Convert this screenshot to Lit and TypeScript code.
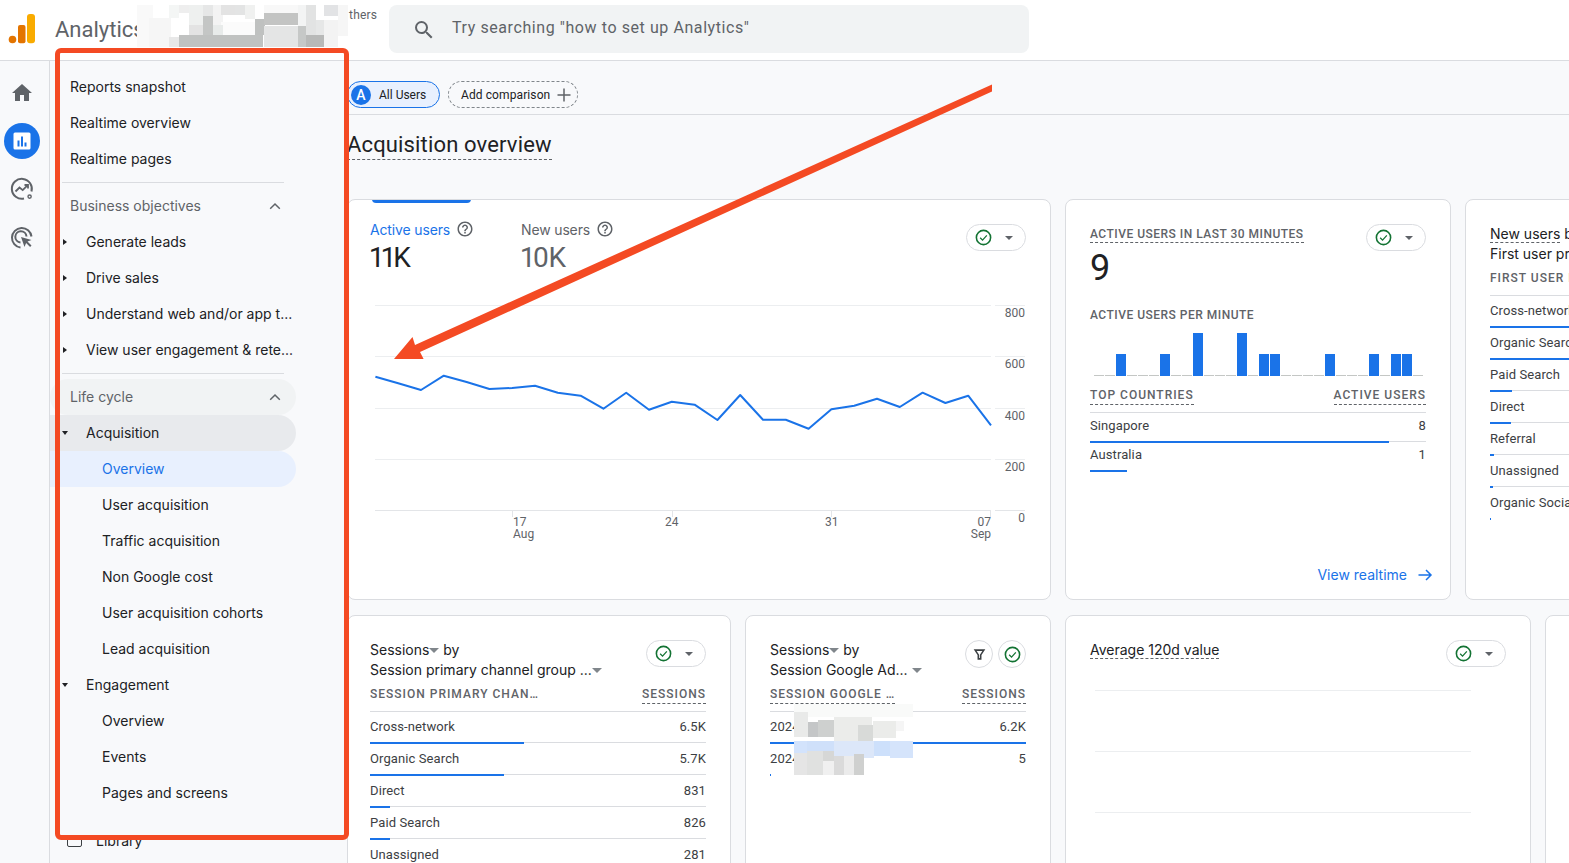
import { LitElement, html, css, svg } from 'lit';
import { customElement } from 'lit/decorators.js';

type Row = { label: string; value: string; bar: number };
type TableCard = {
  width: number;
  first?: boolean;
  title: unknown;
  dim: string;
  dimDashed?: boolean;
  metric: string;
  rows: Row[];
  actions: unknown;
};

const NAV_TOP = ['Reports snapshot', 'Realtime overview', 'Realtime pages'];
const NAV_OBJECTIVES = ['Generate leads', 'Drive sales', 'Understand web and/or app t...', 'View user engagement & rete...'];
const NAV_ACQUISITION = ['User acquisition', 'Traffic acquisition', 'Non Google cost', 'User acquisition cohorts', 'Lead acquisition'];
const NAV_ENGAGEMENT = ['Overview', 'Events', 'Pages and screens'];

const LINE_Y = [
  376.7, 383.3, 390, 375.7, 382, 389, 388, 385.7, 392.7, 395.7, 408.7, 392.7, 409.7, 401.7, 404.7, 420, 395, 419.7,
  419.7, 428.7, 409.3, 405.7, 398.7, 407, 392.7, 403, 395.7, 425.3,
];
const GRID_Y = [
  { y: 305.5, label: '800' },
  { y: 356.5, label: '600' },
  { y: 408.5, label: '400' },
  { y: 459.5, label: '200' },
  { y: 510.5, label: '0' },
];
const MINUTE_BARS = [0, 0, 1, 0, 0, 0, 1, 0, 0, 2, 0, 0, 0, 2, 0, 1, 1, 0, 0, 0, 0, 1, 0, 0, 0, 1, 0, 1, 1, 0];

// censored parts of the screenshot: x, y, w, h, colour
const MOSAIC: [number, number, number, number, string][] = [
  [137, 5, 16, 42, '#f9f9f9'],
  [149, 18, 22, 29, '#f6f6f6'],
  [169, 5, 10, 13, '#f4f6f5'],
  [179, 5, 10, 8, '#eeeeee'],
  [189, 5, 14, 20, '#eef0ef'],
  [203, 5, 10, 11, '#e6e7e7'],
  [189, 25, 14, 10, '#e3e3e3'],
  [203, 16, 10, 19, '#c4c6c5'],
  [213, 5, 10, 20, '#f3f3f3'],
  [221, 5, 14, 10, '#e3e3e3'],
  [235, 5, 10, 10, '#e3e4e4'],
  [245, 5, 10, 14, '#f0f1f0'],
  [169, 37, 10, 10, '#e8e8e8'],
  [179, 35, 84, 12, '#c0c2c1'],
  [221, 22, 34, 13, '#fbfbfb'],
  [213, 25, 10, 10, '#e8ebea'],
  [255, 19, 10, 16, '#bfc1c0'],
  [264, 5, 34, 8, '#f8f8f8'],
  [264, 13, 34, 12, '#c3c4c3'],
  [264, 26, 34, 21, '#e4e5e5'],
  [298, 5, 10, 21, '#f3f4f4'],
  [298, 26, 8, 21, '#c6c8c7'],
  [306, 5, 10, 30, '#e2e3e3'],
  [306, 35, 18, 12, '#b8b9b8'],
  [316, 20, 8, 15, '#e6e7e7'],
  [324, 5, 14, 11, '#e2e3e5'],
  [324, 20, 14, 27, '#f3f3f3'],
  [338, 5, 10, 31, '#f6f6f6'],
  [794, 704, 119, 13, '#f9faf9'],
  [794, 712, 14, 25, '#e9eae9'],
  [808, 722, 10, 15, '#c4c6c7'],
  [818, 720, 16, 17, '#ced0cf'],
  [834, 717, 38, 29, '#ebecea'],
  [858, 725, 15, 21, '#d8dad8'],
  [873, 721, 23, 17, '#ebecea'],
  [896, 721, 8, 10, '#f5f5f5'],
  [794, 741, 13, 17, '#d3e3fc'],
  [807, 741, 28, 15, '#cfe0fa'],
  [834, 741, 40, 17, '#dce7f9'],
  [874, 741, 17, 15, '#cde0fb'],
  [890, 741, 23, 17, '#d5e4fb'],
  [794, 753, 13, 22, '#e5e5e5'],
  [807, 751, 16, 24, '#e0e1e0'],
  [823, 751, 11, 12, '#d6d7d6'],
  [823, 761, 11, 14, '#f0f0f0'],
  [834, 756, 10, 19, '#dadada'],
  [844, 756, 10, 19, '#ebebeb'],
  [854, 754, 10, 21, '#cfd0cf'],
];

const caretDown = html`<span class="caret"></span>`;
const checkIcon = svg`<circle cx="12" cy="12" r="9" fill="none" stroke="#137333" stroke-width="2"/><path d="M7.8 12.3l3 3 5.4-6" fill="none" stroke="#137333" stroke-width="1.6"/>`;
const helpIcon = html`<svg class="help" viewBox="0 0 24 24" fill="#5f6368">
  <path d="M11 18h2v-2h-2v2zm1-16C6.48 2 2 6.48 2 12s4.48 10 10 10 10-4.48 10-10S17.52 2 12 2zm0 18c-4.41 0-8-3.59-8-8s3.59-8 8-8 8 3.59 8 8-3.59 8-8 8zm0-14c-2.21 0-4 1.79-4 4h2c0-1.1.9-2 2-2s2 .9 2 2c0 2-3 1.75-3 5h2c0-2.25 3-2.5 3-5 0-2.21-1.79-4-4-4z"/>
</svg>`;
const statusPill = html`<div class="pill"><svg viewBox="0 0 24 24">${checkIcon}</svg><span class="pill-caret"></span></div>`;

@customElement('app-root')
export class AppRoot extends LitElement {
  static override styles = css`
    :host {
      display: block;
      position: relative;
      height: 100vh;
      overflow: hidden;
      background: #f8f9fb;
      color: #202124;
      font-family: Roboto, 'Liberation Sans', sans-serif;
      font-size: 14px;
    }
    * {
      box-sizing: border-box;
    }

    /* header */
    .topbar {
      height: 61px;
      background: #fff;
      border-bottom: 1px solid #dadce0;
      display: flex;
      align-items: flex-start;
    }
    .logo {
      width: 55px;
      height: 60px;
      flex: none;
    }
    .product {
      font-size: 22px;
      line-height: 28px;
      margin-top: 16px;
      color: #5f6368;
      width: 294px;
      flex: none;
    }
    .account {
      font-size: 12px;
      line-height: 16px;
      margin-top: 7px;
      color: #5f6368;
      width: 40px;
      flex: none;
      letter-spacing: 0.2px;
    }
    .search {
      width: 640px;
      height: 48px;
      margin-top: 5px;
      background: #f1f3f4;
      border-radius: 8px;
      display: flex;
      align-items: center;
      gap: 16px;
      padding-left: 23px;
      padding-bottom: 4px;
      color: #5f6368;
      font-size: 16px;
      letter-spacing: 0.58px;
    }
    .search svg {
      width: 24px;
      height: 24px;
      margin-top: 6px;
      fill: #5f6368;
    }

    .body {
      display: flex;
      height: 802px;
    }

    /* icon rail */
    .rail {
      width: 50px;
      flex: none;
      border-right: 1px solid #dadce0;
      display: flex;
      flex-direction: column;
      align-items: center;
      padding: 14px 5px 0 0;
      gap: 12px;
    }
    .rail-btn {
      width: 36px;
      height: 36px;
      flex: none;
      display: flex;
      align-items: center;
      justify-content: center;
      border-radius: 50%;
    }
    .rail-btn svg {
      width: 24px;
      height: 24px;
    }
    .rail-btn.on {
      background: #1a73e8;
    }

    /* report nav */
    .nav {
      width: 296px;
      flex: none;
      padding-top: 8px;
      font-family: Inter, Roboto, sans-serif;
    }
    .item {
      height: 36px;
      width: 246px;
      display: flex;
      align-items: center;
      padding-left: 20px;
      line-height: 20px;
      position: relative;
      color: #202124;
      white-space: nowrap;
    }
    .lv1 {
      padding-left: 36px;
    }
    .lv2 {
      padding-left: 52px;
    }
    .head {
      color: #5f6368;
      justify-content: space-between;
      padding-right: 15px;
    }
    .head svg {
      width: 12px;
      height: 8px;
    }
    .head.hl {
      background: #f1f3f4;
      border-radius: 18px;
    }
    .open {
      background: #e8eaed;
      border-radius: 0 18px 18px 0;
    }
    .active {
      background: #e8f0fe;
      color: #1a73e8;
      border-radius: 0 18px 18px 0;
    }
    .tri {
      position: absolute;
      left: 13px;
      top: 15px;
      width: 0;
      height: 0;
      border-style: solid;
      border-width: 3px 0 3px 4px;
      border-color: transparent transparent transparent #202124;
    }
    .tri.down {
      left: 12px;
      top: 16px;
      border-width: 4px 3px 0 3px;
      border-color: #202124 transparent transparent transparent;
    }
    .sep {
      height: 1px;
      width: 222px;
      margin: 5px 0 5px 12px;
      background: #dadce0;
    }
    .library {
      margin-top: 12px;
      padding-left: 17px;
      gap: 14px;
    }
    .library .box {
      width: 15px;
      height: 11px;
      border: 1.5px solid #3c4043;
      border-radius: 2px;
    }

    /* main */
    .main {
      flex: 1;
      min-width: 0;
      overflow: hidden;
    }
    .filters {
      height: 54px;
      border-bottom: 1px solid #dadce0;
      display: flex;
      align-items: flex-start;
      gap: 8px;
      padding: 20px 0 0 1px;
      font-size: 12px;
    }
    .chip {
      height: 27px;
      border-radius: 14px;
      display: flex;
      align-items: center;
    }
    .chip.users {
      width: 93px;
      background: #e8f0fe;
      border: 1px solid #1a73e8;
      padding-left: 3px;
      gap: 8px;
      color: #202124;
    }
    .chip .a {
      width: 20px;
      height: 20px;
      border-radius: 50%;
      background: #1a73e8;
      color: #fff;
      font-size: 14px;
      font-weight: 500;
      display: flex;
      align-items: center;
      justify-content: center;
    }
    .chip.add {
      width: 130px;
      border: 1px dashed #80868b;
      padding-left: 12px;
      gap: 6px;
      letter-spacing: 0.1px;
    }
    .chip.add svg {
      width: 16px;
      height: 16px;
    }
    .title-wrap {
      height: 84px;
      padding: 16px 0 0 1px;
    }
    .title {
      display: inline-block;
      margin: 0;
      font-size: 22px;
      font-weight: 400;
      line-height: 28px;
      border-bottom: 1px dashed #5f6368;
      letter-spacing: 0.15px;
    }
    .row {
      display: flex;
      gap: 14px;
      padding-left: 1px;
    }
    .row.first {
      height: 401px;
      margin-bottom: 15px;
    }
    .card {
      flex: none;
      background: #fff;
      border: 1px solid #dadce0;
      border-radius: 8px;
      overflow: hidden;
      display: flex;
      flex-direction: column;
      height: 401px;
    }
    .row:not(.first) .card {
      height: 300px;
    }

    /* chart card */
    .tab {
      width: 99px;
      height: 4px;
      margin-left: 24px;
      background: #1a73e8;
      border-radius: 0 0 4px 4px;
      flex: none;
      margin-top: -1px;
    }
    .metrics {
      height: 92px;
      flex: none;
      padding: 17px 24px 0 22px;
      display: flex;
    }
    .metric {
      width: 151px;
      color: #5f6368;
    }
    .metric.on {
      color: #1a73e8;
    }
    .metric .lbl {
      display: flex;
      align-items: center;
      gap: 6px;
      line-height: 20px;
      letter-spacing: -0.15px;
      font-family: Inter, Roboto, sans-serif;
    }
    .help {
      width: 18px;
      height: 18px;
      margin-top: -2px;
    }
    .metric .num {
      font-size: 28px;
      line-height: 36px;
      color: #5f6368;
      font-variant-numeric: proportional-nums;
      letter-spacing: -0.5px;
    }
    .metric.on .num {
      color: #202124;
    }
    .metrics .pill {
      margin: 4px 0 0 auto;
    }
    .chart {
      display: block;
      width: 690px;
      height: 250px;
    }
    .chart text {
      font: 12px Roboto, sans-serif;
      fill: #5f6368;
    }

    .pill {
      width: 60px;
      height: 27px;
      flex: none;
      border: 1px solid #dadce0;
      border-radius: 14px;
      display: flex;
      align-items: center;
      padding-left: 7px;
      gap: 12px;
    }
    .pill svg {
      width: 19px;
      height: 19px;
    }
    .pill-caret {
      width: 0;
      height: 0;
      border-style: solid;
      border-width: 4px 4px 0 4px;
      border-color: #5f6368 transparent transparent transparent;
    }
    .round {
      width: 28px;
      height: 28px;
      flex: none;
      border: 1px solid #dadce0;
      border-radius: 50%;
      display: flex;
      align-items: center;
      justify-content: center;
    }
    .round svg {
      width: 19px;
      height: 19px;
    }
    .actions {
      display: flex;
      gap: 5px;
    }

    /* realtime card */
    .realtime {
      padding: 26px 24px 14px 24px;
    }
    .top {
      display: flex;
      justify-content: space-between;
      align-items: flex-start;
    }
    .top .pill {
      margin-top: -2px;
    }
    .over {
      font-size: 12px;
      line-height: 16px;
      font-weight: 500;
      color: #5f6368;
      letter-spacing: 0.49px;
      text-transform: uppercase;
    }
    .dash {
      border-bottom: 1px dashed #5f6368;
    }
    .big {
      font-size: 36px;
      line-height: 44px;
      margin-top: -5px;
    }
    .minutes {
      margin-top: 17px;
    }
    .bars {
      display: flex;
      align-items: flex-end;
      gap: 1px;
      height: 44px;
      margin: 9px 0 0 4px;
    }
    .bars i {
      display: block;
      width: 10px;
      flex: none;
      background: #1a73e8;
    }
    .bars i.zero {
      background: #c4c7c5;
    }
    .countries {
      display: flex;
      justify-content: space-between;
      margin-top: 11px;
      padding-bottom: 7px;
      border-bottom: 1px solid #dadce0;
    }
    .countries .over {
      letter-spacing: 1px;
      height: 18px;
    }

    /* rows shared by the cards */
    .trow {
      height: 32px;
      display: block;
    }
    .trow.tight {
      height: 29px;
    }
    .cells {
      height: 31px;
      display: flex;
      justify-content: space-between;
      align-items: flex-start;
      padding-top: 7px;
      font-size: 13px;
      line-height: 16px;
      color: #3c4043;
      letter-spacing: 0.1px;
      white-space: nowrap;
    }
    .tight .cells {
      height: 29px;
      padding-top: 5px;
    }
    .track {
      height: 1px;
      background: #dadce0;
    }
    .trow.last .track {
      background: transparent;
    }
    .fill {
      height: 2px;
      margin-top: -1px;
      background: #1a73e8;
      position: relative;
    }
    .more {
      margin: auto -7px 0 auto;
      display: flex;
      align-items: center;
      gap: 10px;
      color: #1a73e8;
      line-height: 20px;
      font-family: Inter, Roboto, sans-serif;
    }
    .more svg {
      width: 16px;
      height: 16px;
    }

    /* table cards */
    .tcard {
      padding: 24px 24px 0 24px;
    }
    .tcard.first {
      padding-left: 22px;
    }
    .thead {
      display: flex;
      justify-content: space-between;
      align-items: flex-start;
      height: 41px;
      flex: none;
    }
    .ttitle {
      line-height: 20px;
      white-space: nowrap;
      font-family: Inter, Roboto, sans-serif;
    }
    .ttitle .u {
      border-bottom: 1px dashed #5f6368;
    }
    .caret {
      display: inline-block;
      width: 0;
      height: 0;
      border-style: solid;
      border-width: 5px 5px 0 5px;
      border-color: #80868b transparent transparent transparent;
      vertical-align: 2px;
    }
    .cols {
      display: flex;
      justify-content: space-between;
      height: 31px;
      flex: none;
      padding-top: 5px;
      border-bottom: 1px solid #dadce0;
      white-space: nowrap;
    }
    .cols .over {
      letter-spacing: 1px;
      height: 18px;
    }
    .grid {
      margin: 9px 0 0 5px;
      width: 376px;
    }
    .grid div {
      height: 61px;
      border-top: 1px solid #eceef0;
    }

    /* annotation over the screenshot */
    .mosaic {
      position: absolute;
    }
    .redbox {
      position: absolute;
      left: 55px;
      top: 48px;
      width: 294px;
      height: 792px;
      border: 5px solid #f44a23;
      border-radius: 6px;
    }
    .arrow {
      position: absolute;
      left: 0;
      top: 0;
      width: 1569px;
      height: 863px;
      pointer-events: none;
    }
  `;

  private renderRow(r: Row, opts: { tight?: boolean; last?: boolean } = {}) {
    return html`<div class="trow ${opts.tight ? 'tight' : ''} ${opts.last ? 'last' : ''}">
      <div class="cells"><span>${r.label}</span><span>${r.value}</span></div>
      <div class="track"><div class="fill" style="width:${r.bar}px"></div></div>
    </div>`;
  }

  private renderTableCard(c: TableCard) {
    return html`<section class="card tcard ${c.first ? 'first' : ''}" style="width:${c.width}px">
      <div class="thead">
        <div class="ttitle">${c.title}</div>
        ${c.actions}
      </div>
      <div class="cols">
        <span class="over ${c.dimDashed ? 'dash' : ''}">${c.dim}</span>
        <span class="over dash">${c.metric}</span>
      </div>
      ${c.rows.map((r, i) => this.renderRow(r, { last: i === c.rows.length - 1 }))}
    </section>`;
  }

  private chevron() {
    return html`<svg viewBox="0 0 12 8"><path d="M1.2 6.8L6 2l4.8 4.8" fill="none" stroke="#5f6368" stroke-width="1.5" /></svg>`;
  }

  private renderNav() {
    return html`<nav class="nav">
      ${NAV_TOP.map((t) => html`<div class="item">${t}</div>`)}
      <div class="sep"></div>
      <div class="item head"><span>Business objectives</span>${this.chevron()}</div>
      ${NAV_OBJECTIVES.map((t) => html`<div class="item lv1"><i class="tri"></i>${t}</div>`)}
      <div class="sep"></div>
      <div class="item head hl"><span>Life cycle</span>${this.chevron()}</div>
      <div class="item lv1 open"><i class="tri down"></i>Acquisition</div>
      <div class="item lv2 active">Overview</div>
      ${NAV_ACQUISITION.map((t) => html`<div class="item lv2">${t}</div>`)}
      <div class="item lv1"><i class="tri down"></i>Engagement</div>
      ${NAV_ENGAGEMENT.map((t) => html`<div class="item lv2">${t}</div>`)}
      <div class="item library"><span class="box"></span>Library</div>
    </nav>`;
  }

  private renderChart() {
    const pts = LINE_Y.map((y, i) => `${(375.4 + i * 22.8).toFixed(1)},${y}`).join(' ');
    return html`<svg class="chart" viewBox="348 295 690 250">
      ${GRID_Y.map(
        (g) => svg`
          <line x1="375" x2="991" y1=${g.y} y2=${g.y} stroke=${g.label === '0' ? '#e3e5e8' : '#eceef0'} />
          <line x1="995" x2="1025" y1=${g.y} y2=${g.y} stroke=${g.label === '0' ? '#e3e5e8' : '#eceef0'} />
          <text x="1025" y=${g.y + 11.5} text-anchor="end">${g.label}</text>`,
      )}
      ${[512.5, 672.5, 831.5, 990.5].map((x) => svg`<line x1=${x} x2=${x} y1="510" y2="517" stroke="#e3e5e8" />`)}
      <polyline points=${pts} fill="none" stroke="#1a73e8" stroke-width="2" stroke-linejoin="round" />
      <text x="513" y="526">17</text>
      <text x="513" y="538">Aug</text>
      <text x="665" y="526">24</text>
      <text x="825" y="526">31</text>
      <text x="991" y="526" text-anchor="end">07</text>
      <text x="991" y="538" text-anchor="end">Sep</text>
    </svg>`;
  }

  private renderRealtime() {
    return html`<section class="card realtime" style="width:386px">
      <div class="top">
        <span class="over dash">Active users in last 30 minutes</span>
        ${statusPill}
      </div>
      <div class="big">9</div>
      <div class="over minutes">Active users per minute</div>
      <div class="bars">
        ${MINUTE_BARS.map(
          (b) => html`<i class=${b === 0 ? 'zero' : ''} style="height:${b === 0 ? 1 : b === 1 ? 22 : 43}px"></i>`,
        )}
      </div>
      <div class="countries">
        <span class="over dash">Top countries</span>
        <span class="over dash">Active users</span>
      </div>
      ${this.renderRow({ label: 'Singapore', value: '8', bar: 299 }, { tight: true })}
      ${this.renderRow({ label: 'Australia', value: '1', bar: 37 }, { tight: true, last: true })}
      <div class="more">
        View realtime
        <svg viewBox="0 0 16 16"><path d="M1.5 8h12.5M9 3l5 5-5 5" fill="none" stroke="#1a73e8" stroke-width="1.5" /></svg>
      </div>
    </section>`;
  }

  override render() {
    const channelRows: Row[] = [
      { label: 'Cross-network', value: '6.5K', bar: 154 },
      { label: 'Organic Search', value: '5.7K', bar: 134 },
      { label: 'Direct', value: '831', bar: 20 },
      { label: 'Paid Search', value: '826', bar: 20 },
      { label: 'Unassigned', value: '281', bar: 7 },
    ];
    const firstUserRows: Row[] = [
      { label: 'Cross-network', value: '', bar: 160 },
      { label: 'Organic Search', value: '', bar: 130 },
      { label: 'Paid Search', value: '', bar: 22 },
      { label: 'Direct', value: '', bar: 21 },
      { label: 'Referral', value: '', bar: 4 },
      { label: 'Unassigned', value: '', bar: 3 },
      { label: 'Organic Social', value: '', bar: 1 },
    ];
    return html`
      <header class="topbar">
        <svg class="logo" viewBox="0 0 55 60">
          <circle cx="12.5" cy="39.5" r="3.8" fill="#e37400" />
          <rect x="18" y="25" width="7.5" height="18.3" rx="2" fill="#e37400" />
          <rect x="27" y="14" width="8" height="29.3" rx="3" fill="#f9ab00" />
        </svg>
        <div class="product">Analytics</div>
        <div class="account">thers</div>
        <div class="search">
          <svg viewBox="0 0 24 24">
            <path d="M15.5 14h-.79l-.28-.27A6.471 6.471 0 0 0 16 9.5 6.5 6.5 0 1 0 9.5 16c1.61 0 3.09-.59 4.23-1.57l.27.28v.79l5 4.99L20.49 19l-4.99-5zm-6 0C7.01 14 5 11.99 5 9.5S7.01 5 9.5 5 14 7.01 14 9.5 11.99 14 9.5 14z" />
          </svg>
          Try searching "how to set up Analytics"
        </div>
      </header>

      <div class="body">
        <aside class="rail">
          <div class="rail-btn">
            <svg viewBox="0 0 24 24" fill="#5f6368"><path d="M10 20v-6h4v6h5v-8h3L12 3 2 12h3v8z" /></svg>
          </div>
          <div class="rail-btn on">
            <svg viewBox="0 0 24 24">
              <rect x="3.5" y="3.5" width="17" height="17" rx="1.5" fill="#fff" />
              <path d="M7.5 11.5h2v6h-2zM11 7.5h2v10h-2zM14.5 13.5h2v4h-2z" fill="#1a73e8" />
            </svg>
          </div>
          <div class="rail-btn">
            <svg viewBox="0 0 24 24" fill="none" stroke="#5f6368" stroke-width="2">
              <path d="M21.5 14.5A10 10 0 1 0 14 21.6" />
              <path d="M5.5 14.5l4-4 3.2 2.6 5-5M14.5 8h3.5v3.5" stroke-width="1.8" />
              <circle cx="19.6" cy="19.6" r="1.6" stroke-width="1.4" />
            </svg>
          </div>
          <div class="rail-btn">
            <svg viewBox="0 -1 24 24" fill="none" stroke="#5f6368" stroke-width="2">
              <path d="M21.5 10.5A9.8 9.8 0 1 0 10.5 21.5" />
              <path d="M16.5 10.5a5.6 5.6 0 1 0-6 6" />
              <path d="M11 11l3.5 10 1.6-4 4 4 1.4-1.4-4-4 4-1.6z" fill="#5f6368" stroke="none" />
            </svg>
          </div>
        </aside>

        ${this.renderNav()}

        <main class="main">
          <div class="filters">
            <div class="chip users"><span class="a">A</span>All Users</div>
            <div class="chip add">
              Add comparison
              <svg viewBox="0 0 16 16"><path d="M8 1.5v13M1.5 8h13" fill="none" stroke="#5f6368" stroke-width="1.5" /></svg>
            </div>
          </div>
          <div class="title-wrap"><h1 class="title">Acquisition overview</h1></div>

          <div class="row first">
            <section class="card" style="width:704px">
              <div class="tab"></div>
              <div class="metrics">
                <div class="metric on">
                  <div class="lbl">Active users ${helpIcon}</div>
                  <div class="num">11K</div>
                </div>
                <div class="metric">
                  <div class="lbl">New users ${helpIcon}</div>
                  <div class="num">10K</div>
                </div>
                ${statusPill}
              </div>
              ${this.renderChart()}
            </section>
            ${this.renderRealtime()}
            ${this.renderTableCard({
              width: 386,
              title: html`<span class="u">New users</span> by<br />First user primary channel group`,
              dim: 'First user primary channel',
              metric: 'New users',
              rows: firstUserRows,
              actions: statusPill,
            })}
          </div>

          <div class="row">
            ${this.renderTableCard({
              width: 384,
              first: true,
              title: html`Sessions${caretDown} by<br />Session primary channel group ...${caretDown}`,
              dim: 'Session primary chan…',
              metric: 'Sessions',
              rows: channelRows,
              actions: html`<div class="actions">${statusPill}</div>`,
            })}
            ${this.renderTableCard({
              width: 306,
              title: html`Sessions${caretDown} by<br />Session Google Ad... ${caretDown}`,
              dim: 'Session Google …',
              dimDashed: true,
              metric: 'Sessions',
              rows: [
                { label: '2024', value: '6.2K', bar: 256 },
                { label: '2024', value: '5', bar: 1 },
              ],
              actions: html`<div class="actions">
                <div class="round">
                  <svg viewBox="0 0 24 24"><path d="M6.5 6.5h11l-4 6v5h-3v-5z" fill="none" stroke="#3c4043" stroke-width="2" /></svg>
                </div>
                <div class="round"><svg viewBox="0 0 24 24">${checkIcon}</svg></div>
              </div>`,
            })}
            <section class="card tcard" style="width:466px">
              <div class="thead">
                <div class="ttitle"><span class="u">Average 120d value</span></div>
                <div class="actions">${statusPill}</div>
              </div>
              <div class="grid"><div></div><div></div><div></div></div>
            </section>
            <section class="card" style="width:100px"></section>
          </div>
        </main>
      </div>

      ${MOSAIC.map(
        ([x, y, w, h, c]) =>
          html`<div class="mosaic" style="left:${x}px;top:${y}px;width:${w}px;height:${h}px;background:${c}"></div>`,
      )}
      <div class="redbox"></div>
      <svg class="arrow" viewBox="0 0 1569 863">
        <polygon points="394,359 412.5,337 415,345 992,84.5 992,91.5 420,352 423.6,359" fill="#f44a23" />
      </svg>
    `;
  }
}
